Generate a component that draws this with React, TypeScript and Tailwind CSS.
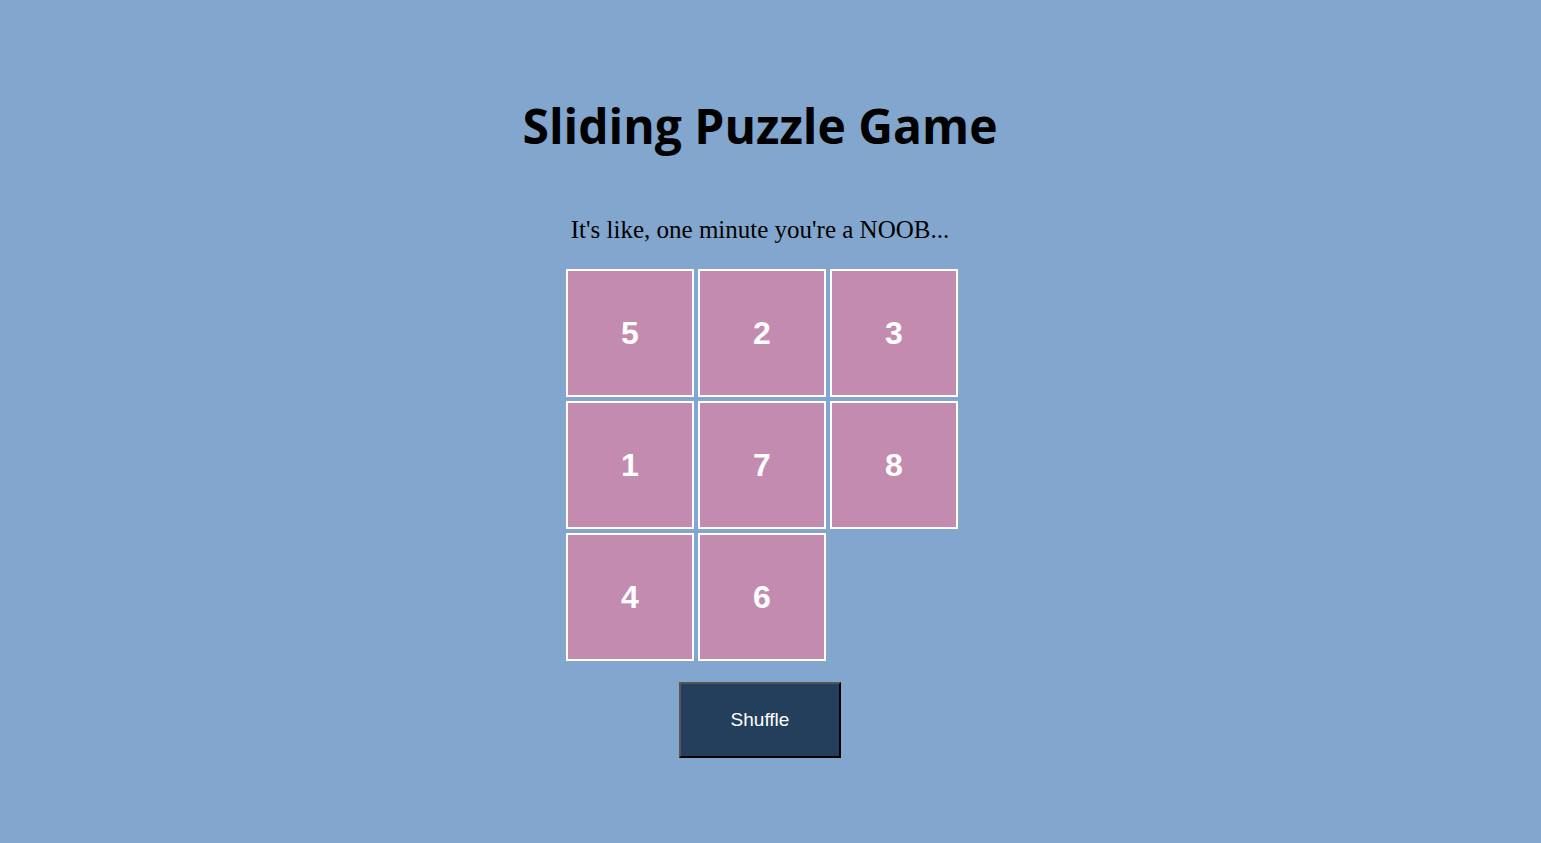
import React, { useState } from "react";

const START = [5, 2, 3, 1, 7, 8, 4, 6, 0];

function Tile({ value }: { value: number }) {
  if (value === 0) return <div className="w-[128px] h-[128px]" />;
  return (
    <div className="w-[128px] h-[128px] border-2 border-white bg-[#c48bb1] flex items-center justify-center text-white font-bold text-[32px] font-['Liberation_Sans',Arial,sans-serif]">
      {value}
    </div>
  );
}

export default function App() {
  const [tiles, setTiles] = useState<number[]>(START);

  const shuffle = () => {
    const next = [...tiles];
    for (let i = next.length - 1; i > 0; i--) {
      const j = Math.floor(Math.random() * (i + 1));
      [next[i], next[j]] = [next[j], next[i]];
    }
    setTiles(next);
  };

  return (
    <div className="min-h-screen w-full bg-[#82a6cd] flex flex-col items-center pr-[21px]">
      <h1 className="mt-[102px] text-[48px] leading-[48px] font-bold text-black font-['Open_Sans',sans-serif]">
        Sliding Puzzle Game
      </h1>
      <p className="mt-[65px] text-[25px] leading-[29px] text-black font-['Liberation_Serif','Times_New_Roman',serif]">
        It's like, one minute you're a NOOB...
      </p>
      <div className="mt-[25px] ml-[4px] grid grid-cols-[repeat(3,128px)] gap-[4px]">
        {tiles.map((v, i) => (
          <Tile key={i} value={v} />
        ))}
      </div>
      <button
        onClick={shuffle}
        className="mt-[21px] w-[162px] h-[76px] bg-[#243f5c] text-white text-[19px] font-['Liberation_Sans',Arial,sans-serif] border-2 border-t-[#555555] border-l-[#555555] border-b-black border-r-black"
      >
        Shuffle
      </button>
    </div>
  );
}
